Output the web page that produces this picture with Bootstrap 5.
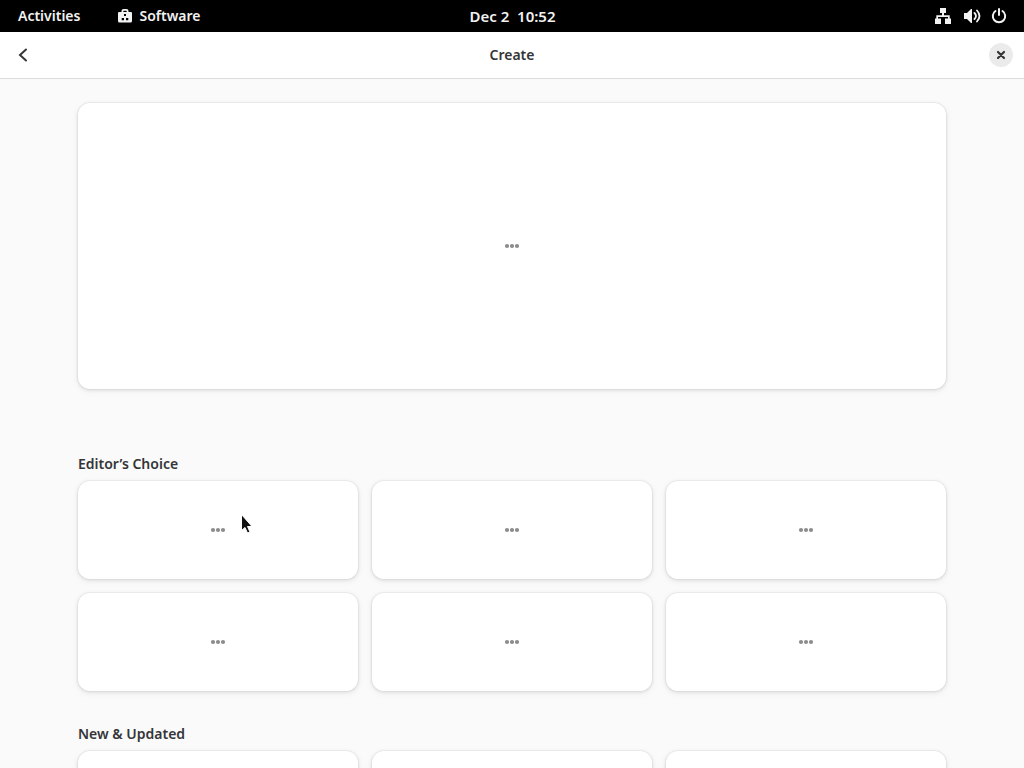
<!DOCTYPE html>
<html lang="en">
<head>
<meta charset="utf-8">
<meta name="viewport" content="width=device-width, initial-scale=1">
<title>Software</title>
<link href="https://cdn.jsdelivr.net/npm/bootstrap@5.3.0/dist/css/bootstrap.min.css" rel="stylesheet">
<style>
body{font-family:"Noto Sans",sans-serif;font-size:14px;line-height:22px;font-weight:600;color:#353538;background:#fafafa}
.shell-bar{height:32px;background:#000;color:#f2f2f2}
.shell-side{flex:1 1 0}
.shell-start{padding-left:18px;gap:38px}
.shell-end{padding-right:17px}
.shell-bar button,.back-btn,.close-btn{border:0;background:none;color:inherit;font:inherit;padding:0}
.shell-bar .app-menu{gap:7px}
.shell-bar .clock{font-size:15px}
.tray{gap:9px}
.window-bar{height:47px;background:#fff;border-bottom:1px solid #dbdbdb;padding:0 11px}
.back-btn,.close-btn{width:24px;height:24px}
.close-btn{border-radius:50%;background:#ebebeb}
.view{scrollbar-width:none}
.page-col{max-width:868px}
.tile{background:#fff;border-radius:12px;box-shadow:0 0 0 1px rgba(0,0,0,.03),0 1px 3px 1px rgba(0,0,0,.07),0 2px 6px 2px rgba(0,0,0,.03);height:98px;color:#8c8c8c}
.tile-hero{height:286px;margin-bottom:64px}
.tile-grid{display:grid;grid-template-columns:repeat(3,1fr);gap:14px;margin-bottom:32px}
h1,h2{font-size:14px;line-height:22px;font-weight:600;margin:0}
h2{margin-bottom:6px}
svg{display:block;fill:currentColor}
.pointer{position:fixed;left:240px;top:513px;pointer-events:none}
</style>
</head>
<body class="vh-100 d-flex flex-column overflow-hidden">
<svg width="0" height="0" class="position-absolute" aria-hidden="true"><symbol id="dots" viewBox="0 0 16 6"><circle cx="3" cy="3" r="2.1"/><circle cx="8" cy="3" r="2.1"/><circle cx="13" cy="3" r="2.1"/></symbol></svg>
<nav class="shell-bar d-flex align-items-center flex-shrink-0" aria-label="System">
  <div class="shell-side shell-start d-flex">
    <button type="button">Activities</button>
    <button type="button" class="app-menu d-flex align-items-center"><svg width="14" height="14" viewBox="1 1 14 14"><path fill-rule="evenodd" d="M4.500 4V3q0-2 2-2h3q2 0 2 2v1H14q1 0 1 1v8q0 1.500-1.500 1.500h-11Q1 14.500 1 13V5q0-1 1-1zM6.300 4h3.400V3.300q0-.6-.6-.6H6.900q-.6 0-.6.6zM7 6v2h2V6zM4.700 10v2.300H7V10zM9 10v2.300h2.300V10z"/></svg>Software</button>
  </div>
  <button type="button" class="clock">Dec 2&nbsp; 10:52</button>
  <div class="shell-side shell-end d-flex justify-content-end">
    <button type="button" class="tray d-flex" aria-label="System menu">
      <svg width="20" height="16" viewBox="0 0 20 16"><path d="M7 0h6v5h-2v2.200h5.700V10.500H18V16h-6v-5.500h3V9H5v1.500h3V16H2v-5.500h1.300V7.200H9V5H7z"/></svg>
      <svg width="20" height="16" viewBox="0 0 20 16"><path d="M2 5h3l4-4h1v14H9l-4-4H2z"/><path d="M12.500 5q3 3 0 6M15 2.500q5 5.500 0 11" fill="none" stroke="currentColor" stroke-width="1.800" stroke-linecap="round"/></svg>
      <svg width="16" height="16" viewBox="0 0 16 16"><path d="M4.500 3a6.200 6.200 0 1 0 7 0M8 1v6" fill="none" stroke="currentColor" stroke-width="2" stroke-linecap="round"/></svg>
    </button>
  </div>
</nav>
<header class="window-bar d-flex align-items-center flex-shrink-0">
  <div class="shell-side d-flex"><button type="button" class="back-btn d-flex align-items-center justify-content-center" aria-label="Back"><svg width="16" height="16" viewBox="0 0 16 16"><path d="M11 2.500 5 8l6 5.500" fill="none" stroke="currentColor" stroke-width="2" stroke-linecap="round"/></svg></button></div>
  <h1>Create</h1>
  <div class="shell-side d-flex justify-content-end"><button type="button" class="close-btn d-flex align-items-center justify-content-center" aria-label="Close"><svg width="16" height="16" viewBox="0 0 16 16"><path d="m5 5 6 6m0-6-6 6" fill="none" stroke="currentColor" stroke-width="2.200" stroke-linecap="round"/></svg></button></div>
</header>
<main class="view flex-grow-1 overflow-auto pt-4">
  <div class="page-col mx-auto">
    <div class="tile tile-hero d-flex align-items-center justify-content-center"><svg width="16" height="6"><use href="#dots"/></svg></div>
    <section>
      <h2>Editor’s Choice</h2>
      <div class="tile-grid">
        <div class="tile d-flex align-items-center justify-content-center"><svg width="16" height="6"><use href="#dots"/></svg></div>
        <div class="tile d-flex align-items-center justify-content-center"><svg width="16" height="6"><use href="#dots"/></svg></div>
        <div class="tile d-flex align-items-center justify-content-center"><svg width="16" height="6"><use href="#dots"/></svg></div>
        <div class="tile d-flex align-items-center justify-content-center"><svg width="16" height="6"><use href="#dots"/></svg></div>
        <div class="tile d-flex align-items-center justify-content-center"><svg width="16" height="6"><use href="#dots"/></svg></div>
        <div class="tile d-flex align-items-center justify-content-center"><svg width="16" height="6"><use href="#dots"/></svg></div>
      </div>
    </section>
    <section>
      <h2>New &amp; Updated</h2>
      <div class="tile-grid">
        <div class="tile d-flex align-items-center justify-content-center"><svg width="16" height="6"><use href="#dots"/></svg></div>
        <div class="tile d-flex align-items-center justify-content-center"><svg width="16" height="6"><use href="#dots"/></svg></div>
        <div class="tile d-flex align-items-center justify-content-center"><svg width="16" height="6"><use href="#dots"/></svg></div>
      </div>
    </section>
  </div>
</main>
<svg class="pointer" width="16" height="24" viewBox="0 0 16 24" aria-hidden="true"><path d="M1.500 1.500v16l3.500-3 2.500 5.500 2.500-1-2.500-5.500H12z" fill="#111" stroke="#fff" stroke-width="1"/></svg>
<script src="https://cdn.jsdelivr.net/npm/bootstrap@5.3.0/dist/js/bootstrap.bundle.min.js"></script>
</body>
</html>
